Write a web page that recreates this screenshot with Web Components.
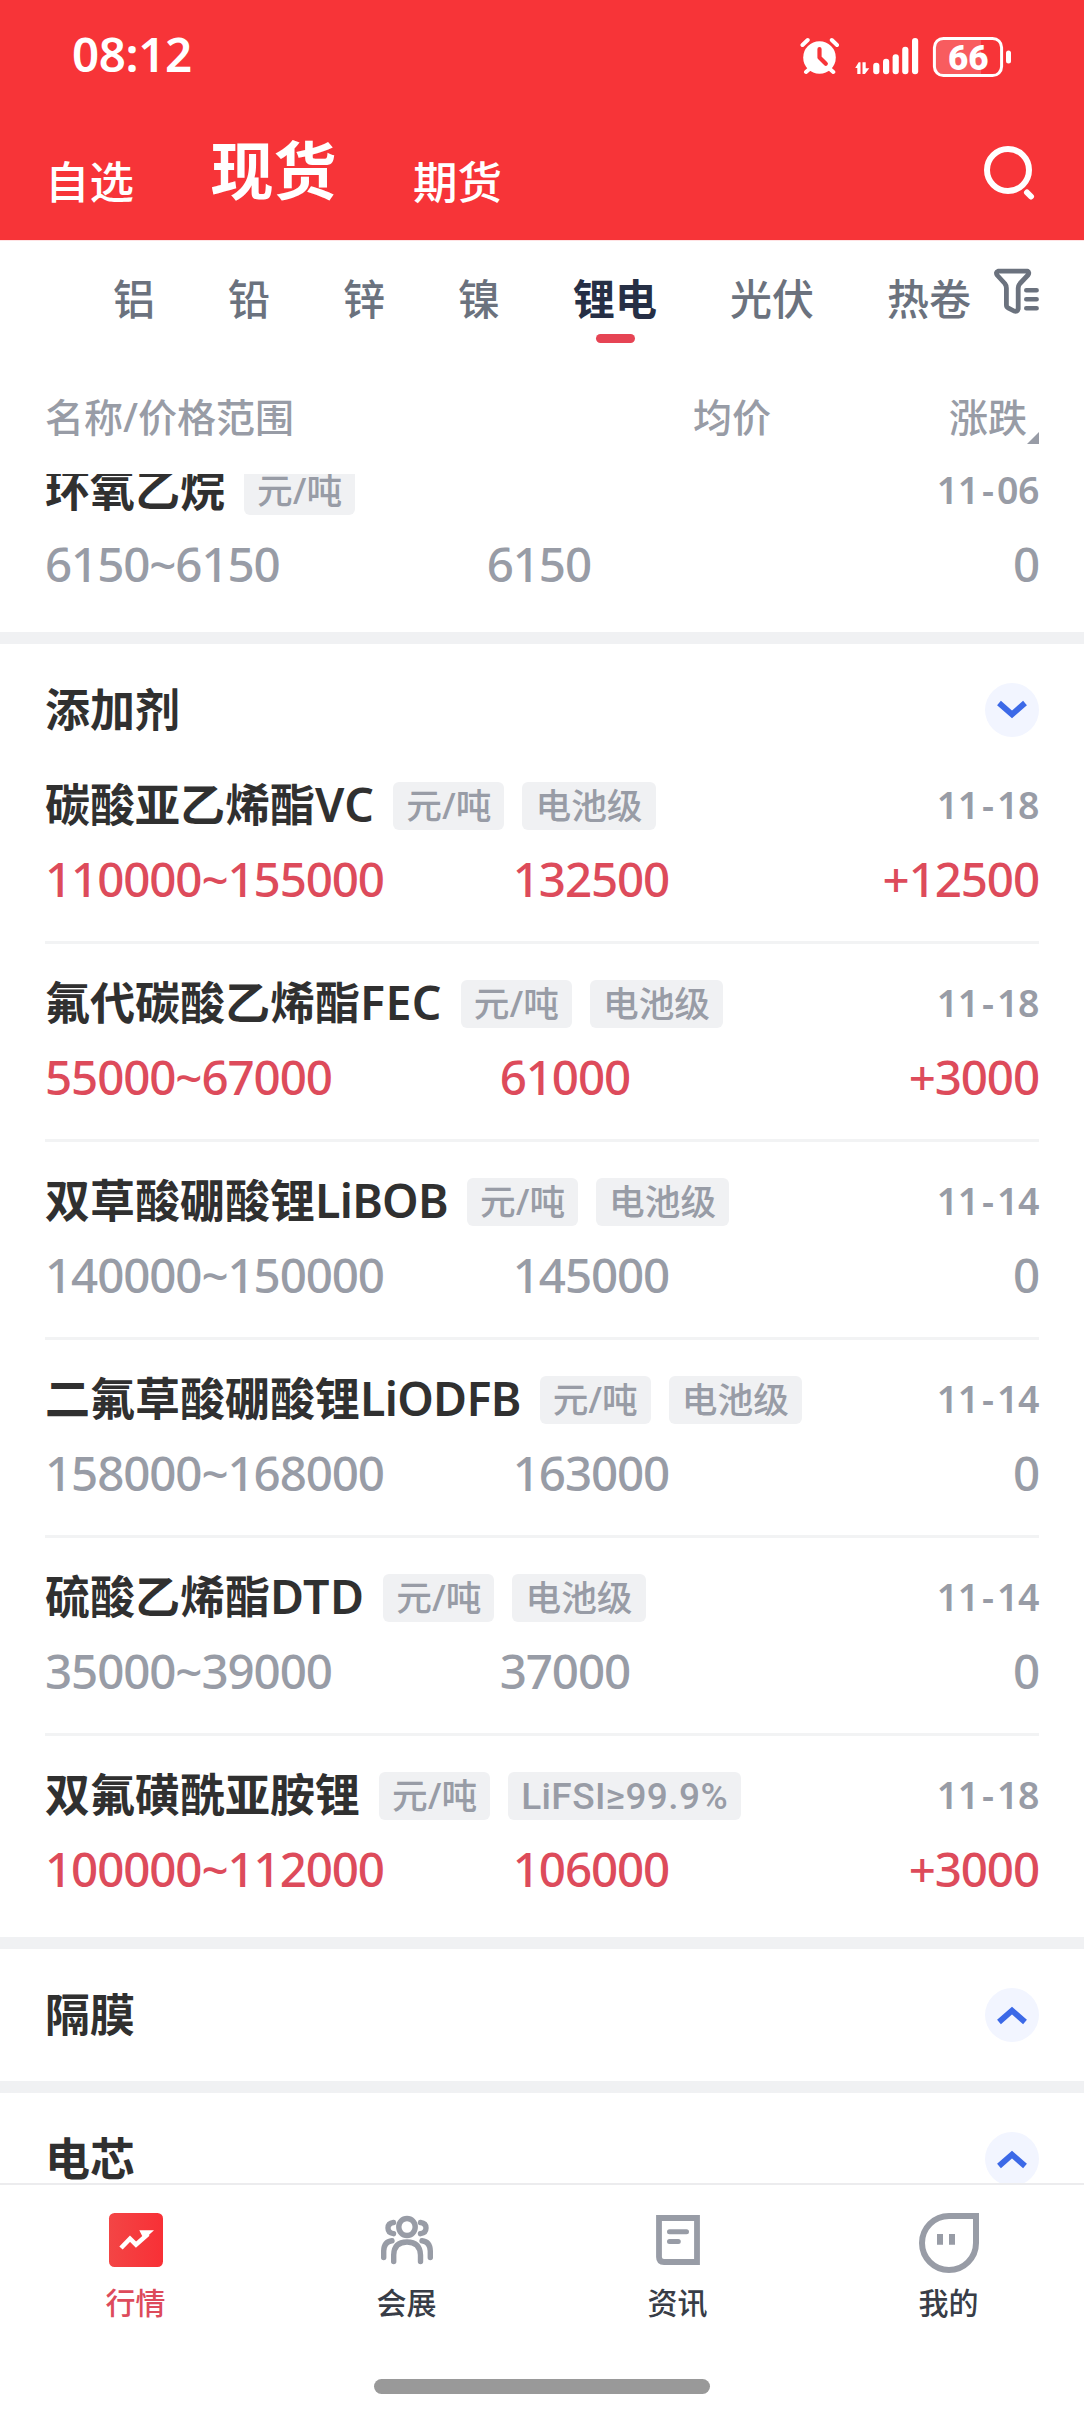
<!DOCTYPE html>
<html lang="zh-CN">
<head>
<meta charset="utf-8">
<title>现货</title>
<style>
  body {
    margin: 0;
    background: #fff;
    font-family: "Noto Sans", "Noto Sans CJK SC", sans-serif;
    font-weight: 500;
  }
</style>
</head>
<body>
<market-app></market-app>

<script>
// Small helper: every element clones its own template into an open root.
function attach(el, html) {
    const template = document.createElement('template');
    template.innerHTML = html;
    const root = el.attachShadow({ mode: 'open' });
    root.appendChild(template.content.cloneNode(true));
    return root;
}

class StatusBar extends HTMLElement {
    constructor() {
        super();
        attach(this, `
          <style>
            :host {
              display: flex;
              justify-content: space-between;
              height: 108px;
              padding: 0 72px;
              color: #fff;
            }
            time {
              font-size: 47.5px;
              font-weight: 600;
              line-height: 60px;
              letter-spacing: -.4px;
              padding-top: 24px;
            }
            svg { margin-top: 36px; }
            text { font: 900 35px Roboto, sans-serif; }
          </style>
          <time>08:12</time>
          <svg width="212" height="44" viewBox="20 16 212 44" fill="none" stroke="#fff" stroke-linecap="round">
            <circle cx="39.5" cy="37.5" r="16.3" fill="#fff" stroke="none"/>
            <path d="M22.5 25l5.2-5M51.8 20l5.2 5M26 52l4-3.5M53.3 52l-4-3.5" stroke-width="4"/>
            <path d="M39.5 29v8.5l6.3 6.3" stroke="#f73438" stroke-width="4.2" stroke-linejoin="round"/>
            <g fill="#fff" stroke="none">
              <path d="M75.2 48l3.5-5.8h1.8V54h-3.2v-6zM82.5 42.2h3.2v6h3.6l-4.4 5.8h-2.4z"/>
              <rect x="93.2" y="42.7" width="6.2" height="11.5" rx="3"/>
              <rect x="103" y="38.8" width="6.2" height="15.4" rx="3"/>
              <rect x="112.6" y="34.2" width="6.2" height="20" rx="3"/>
              <rect x="122.2" y="26.8" width="6.2" height="27.4" rx="3"/>
              <rect x="132" y="18" width="6.2" height="36.2" rx="3"/>
              <path d="M163 19h-2a7 7 0 0 0-6 7v22a7 7 0 0 0 7 6.5h39v-35.5z" fill-opacity=".2"/>
              <rect x="226" y="30.5" width="5" height="13" rx="2.5"/>
              <text x="188.2" y="49.7" text-anchor="middle">66</text>
            </g>
            <rect x="154.4" y="18.4" width="67.2" height="37.2" rx="9" stroke-width="3"/>
          </svg>
        `);
    }
}

class MainTabs extends HTMLElement {
    constructor() {
        super();
        attach(this, `
          <style>
            :host {
              display: flex;
              align-items: flex-end;
              height: 132px;
              padding: 0 46px 0 45px;
              box-sizing: border-box;
              color: #fff;
              font-size: 44.5px;
              line-height: 60px;
              white-space: nowrap;
            }
            ::slotted(*) { margin: 0 76.5px 28px 0; }
            ::slotted([active]) {
              font-size: 63px;
              font-weight: 700;
              margin-bottom: 40px;
            }
            svg { margin: 0 2px 40px auto; }
          </style>
          <slot></slot>
          <svg width="54" height="56" viewBox="982 144 54 56" fill="none" stroke="#fff" stroke-width="6">
            <circle cx="1008" cy="170" r="21"/>
            <path d="M1027 192.500l4 4" stroke-linecap="round"/>
          </svg>
        `);
    }
}

class CategoryTabs extends HTMLElement {
    constructor() {
        super();
        attach(this, `
          <style>
            :host {
              display: flex;
              gap: 73px;
              height: 128px;
              padding: 0 45px 0 113px;
              box-sizing: border-box;
              border-top: 1px solid #ffe3e4;
              color: #6b727e;
              font-size: 42px;
              line-height: 60px;
              white-space: nowrap;
            }
            ::slotted(*) { flex: none; }
            ::slotted(:not([slot=active])) { padding-top: 28px; }
            .active {
              display: flex;
              flex: none;
              flex-direction: column;
              align-items: center;
              color: #262f45;
              font-weight: 700;
              padding-top: 28px;
            }
            .active::after {
              content: "";
              width: 39px;
              height: 9px;
              margin-top: 5px;
              border-radius: 4.5px;
              background: #e64454;
            }
            svg { flex: none; margin: 27px 0 0 -50px; }
          </style>
          <slot></slot>
          <div class="active"><slot name="active"></slot></div>
          <slot name="after"></slot>
          <svg width="45" height="46" viewBox="0 0 45 46" fill="none" stroke="#6b727e" stroke-width="4.8" stroke-linejoin="round" stroke-linecap="round">
            <path d="M4 3.200H33.500Q35.800 4.500 34 7L26 15.500Q24.200 17.500 24.200 20V41Q23.500 44 20 43L14 39.800Q12.400 39 12.400 37V20Q12.400 17.500 10.800 15.500L3 7Q1.500 4 4 3.200Z"/>
            <path d="M32.300 22.200H42.600M32.300 31.300H42.600M32.300 40.300H42.600" stroke-width="4.6"/>
          </svg>
        `);
    }
}

class ColumnHeader extends HTMLElement {
    constructor() {
        super();
        attach(this, `
          <style>
            :host {
              display: grid;
              grid-template-columns: 648px 1fr auto 12px;
              height: 106px;
              padding: 19px 45px 0 45px;
              box-sizing: border-box;
              color: #989ca6;
              font-size: 39px;
              line-height: 60px;
            }
            i {
              width: 12px;
              height: 12px;
              margin-top: 45px;
              background: #989ca6;
              clip-path: polygon(100% 0, 100% 100%, 0 100%);
            }
          </style>
          <span>名称/价格范围</span><span>均价</span><span>涨跌</span><i></i>
        `);
    }
}

class PriceItem extends HTMLElement {
    constructor() {
        super();
        attach(this, `
          <style>
            :host {
              display: block;
              margin: 0 45px;
              padding: 36px 0 31px;
              border-bottom: 3px solid #f2f3f4;
              color: #989ca6;
            }
            :host([first]) { padding-top: 6px; }
            :host([last]) { padding-bottom: 37px; border: 0; }
            .title { display: flex; height: 48px; line-height: 48px; }
            .name {
              margin-right: 19px;
              color: #303030;
              font-size: 45px;
              font-weight: 600;
              line-height: 45px;
              white-space: nowrap;
            }
            .name span { font-size: 46.5px; letter-spacing: .4px; }
            .name .long { letter-spacing: -.7px; }
            .tag {
              padding: 0 13px;
              margin-right: 18px;
              border-radius: 6px;
              background: #f0f1f3;
              font-size: 35.7px;
              line-height: 46px;
              white-space: nowrap;
            }
            .tag.latin { font-family: Roboto, sans-serif; font-size: 37px; letter-spacing: .4px; line-height: 49px; }
            .date {
              margin-left: auto;
              font-size: 37.5px;
              font-weight: 600;
              line-height: 46px;
              letter-spacing: -.5px;
            }
            .date span { padding: 0 3.5px; }
            .values {
              display: flex;
              margin-top: 20px;
              height: 60px;
              line-height: 58px;
              font-size: 47.5px;
              letter-spacing: -1.1px;
            }
            :host([up]) .values { color: #dd4b5b; }
            .range, .price { flex: 1 1 auto; }
            .change { width: 241px; text-align: right; }
          </style>
          <div class="title"><span class="name"></span></div>
          <div class="values">
            <span class="range"></span><span class="price"></span><span class="change"></span>
          </div>
        `);
    }

    connectedCallback() {
        const root = this.shadowRoot;
        const get = (name) => this.getAttribute(name) || '';
        root.querySelector('.name').innerHTML = get('name').replace(/[A-Za-z]+/, (word) =>
            `<span class="${word.length > 3 ? 'long' : ''}">${word}</span>`);
        const title = root.querySelector('.title');
        get('tags').split(',').forEach((text) => {
            const tag = document.createElement('span');
            tag.className = /^[A-Z]/.test(text) ? 'tag latin' : 'tag';
            tag.textContent = text;
            title.appendChild(tag);
        });
        const date = document.createElement('span');
        date.className = 'date';
        date.innerHTML = get('date').replace('-', '<span>-</span>');
        title.appendChild(date);
        ['range', 'price', 'change'].forEach((key) => {
            root.querySelector('.' + key).textContent = get(key);
        });
    }
}

class PriceSection extends HTMLElement {
    constructor() {
        super();
        const arrow = this.hasAttribute('open') ? 'M14 20l13 11.500 13-11.500' : 'M14 34l13-11.500 13 11.500';
        attach(this, `
          <style>
            :host { display: block; border-top: 12px solid #f0f1f3; }
            header {
              display: flex;
              align-items: center;
              justify-content: space-between;
              height: 132px;
              padding: 0 45px;
              color: #303030;
              font-size: 45px;
              font-weight: 700;
              line-height: 60px;
            }
          </style>
          <header>
            <span>${this.getAttribute('heading')}</span>
            <svg width="54" height="54" fill="none">
              <circle cx="27" cy="27" r="27" fill="#f2f5ff"/>
              <path d="${arrow}" stroke="#3c69e7" stroke-width="5.8"/>
            </svg>
          </header>
          <slot></slot>
        `);
    }
}

const icons = {
    market: `
      <defs><linearGradient id="g"><stop stop-color="#f34545"/><stop offset="1" stop-color="#f83036"/></linearGradient></defs>
      <rect x="3" width="54" height="54" rx="5.500" fill="url(#g)"/>
      <path d="M15 35l9-9.300 6 6L42 21" stroke="#fff" stroke-width="4.600"/>
      <path d="M33.300 17.300H48L38 26.500z" fill="#fff"/>`,
    expo: `
      <g stroke="#989ca6" stroke-width="5.4" stroke-linecap="round">
        <ellipse cx="30" cy="14" rx="8.200" ry="8.500"/>
        <path d="M16.700 48.600V42Q17 29 30 29T43.500 42V48.600"/>
        <path d="M16.500 9.500Q11 10.200 11 15T16.500 20.700M43.500 9.500Q49 10.200 49 15T43.500 20.700"/>
        <path d="M6.700 44.500V38Q7 28.500 15 27.700M53.300 44.500V38Q53 28.500 45 27.700"/>
      </g>`,
    news: `
      <g stroke="#989ca6">
        <path d="M11 5H49V49H16Q11 49 11 44Z" stroke-width="5.8"/>
        <path d="M21.500 18.700H38.500M21.500 28.500H30.300" stroke-width="5" stroke-linecap="round"/>
      </g>`,
    mine: `
      <path d="M30 3H57V30A27 27 0 1 1 30 3Z" stroke="#989ca6" stroke-width="6"/>
      <path d="M18 21h6v10.700h-6zM30 21h6v10.700h-6z" fill="#989ca6"/>`
};

class NavItem extends HTMLElement {
    constructor() {
        super();
        attach(this, `
          <style>
            :host {
              display: flex;
              flex: 1;
              flex-direction: column;
              align-items: center;
              color: #383d47;
              font-size: 30px;
              line-height: 40px;
            }
            :host([active]) { color: #dd4b5b; }
            svg { margin: 28px 0 10px; }
          </style>
          <svg width="60" height="60" viewBox="0 0 60 60" fill="none">${icons[this.getAttribute('icon')]}</svg>
          <slot></slot>
        `);
    }
}

class BottomNav extends HTMLElement {
    constructor() {
        super();
        attach(this, `
          <style>
            :host {
              display: flex;
              flex-direction: column;
              align-items: center;
              height: 229px;
              box-sizing: border-box;
              border-top: 2px solid #ececee;
              background: #fff;
            }
            nav { display: flex; width: 100%; height: 194px; }
            .home { width: 336px; height: 15px; border-radius: 7.5px; background: #999; }
          </style>
          <nav><slot></slot></nav>
          <div class="home"></div>
        `);
    }
}

class MarketApp extends HTMLElement {
    constructor() {
        super();
        attach(this, `
          <style>
            :host {
              display: flex;
              flex-direction: column;
              width: 1084px;
              height: 2412px;
              overflow: hidden;
            }
            .top { background: #f73438; }
            .list { flex: 1; min-height: 0; overflow: hidden; }
            /* the list is scrolled, so its first row is cut by the header */
            .list > price-item { margin-top: -13px; }
          </style>
          <div class="top">
            <status-bar></status-bar>
            <main-tabs><span>自选</span><span active>现货</span><span>期货</span></main-tabs>
          </div>
          <category-tabs>
            <span>铝</span><span>铅</span><span>锌</span><span>镍</span>
            <span slot="active">锂电</span>
            <span slot="after">光伏</span><span slot="after">热卷</span>
          </category-tabs>
          <column-header></column-header>
          <div class="list">
            <price-item first last name="环氧乙烷" tags="元/吨" date="11-06" range="6150~6150" price="6150" change="0"></price-item>
            <price-section heading="添加剂" open>
              <price-item first up name="碳酸亚乙烯酯VC" tags="元/吨,电池级" date="11-18" range="110000~155000" price="132500" change="+12500"></price-item>
              <price-item up name="氟代碳酸乙烯酯FEC" tags="元/吨,电池级" date="11-18" range="55000~67000" price="61000" change="+3000"></price-item>
              <price-item name="双草酸硼酸锂LiBOB" tags="元/吨,电池级" date="11-14" range="140000~150000" price="145000" change="0"></price-item>
              <price-item name="二氟草酸硼酸锂LiODFB" tags="元/吨,电池级" date="11-14" range="158000~168000" price="163000" change="0"></price-item>
              <price-item name="硫酸乙烯酯DTD" tags="元/吨,电池级" date="11-14" range="35000~39000" price="37000" change="0"></price-item>
              <price-item last up name="双氟磺酰亚胺锂" tags="元/吨,LiFSI≥99.9%" date="11-18" range="100000~112000" price="106000" change="+3000"></price-item>
            </price-section>
            <price-section heading="隔膜"></price-section>
            <price-section heading="电芯"></price-section>
          </div>
          <bottom-nav>
            <nav-item icon="market" active>行情</nav-item>
            <nav-item icon="expo">会展</nav-item>
            <nav-item icon="news">资讯</nav-item>
            <nav-item icon="mine">我的</nav-item>
          </bottom-nav>
        `);
    }
}

customElements.define('status-bar', StatusBar);
customElements.define('main-tabs', MainTabs);
customElements.define('category-tabs', CategoryTabs);
customElements.define('column-header', ColumnHeader);
customElements.define('price-item', PriceItem);
customElements.define('price-section', PriceSection);
customElements.define('nav-item', NavItem);
customElements.define('bottom-nav', BottomNav);
customElements.define('market-app', MarketApp);
</script>
</body>
</html>
